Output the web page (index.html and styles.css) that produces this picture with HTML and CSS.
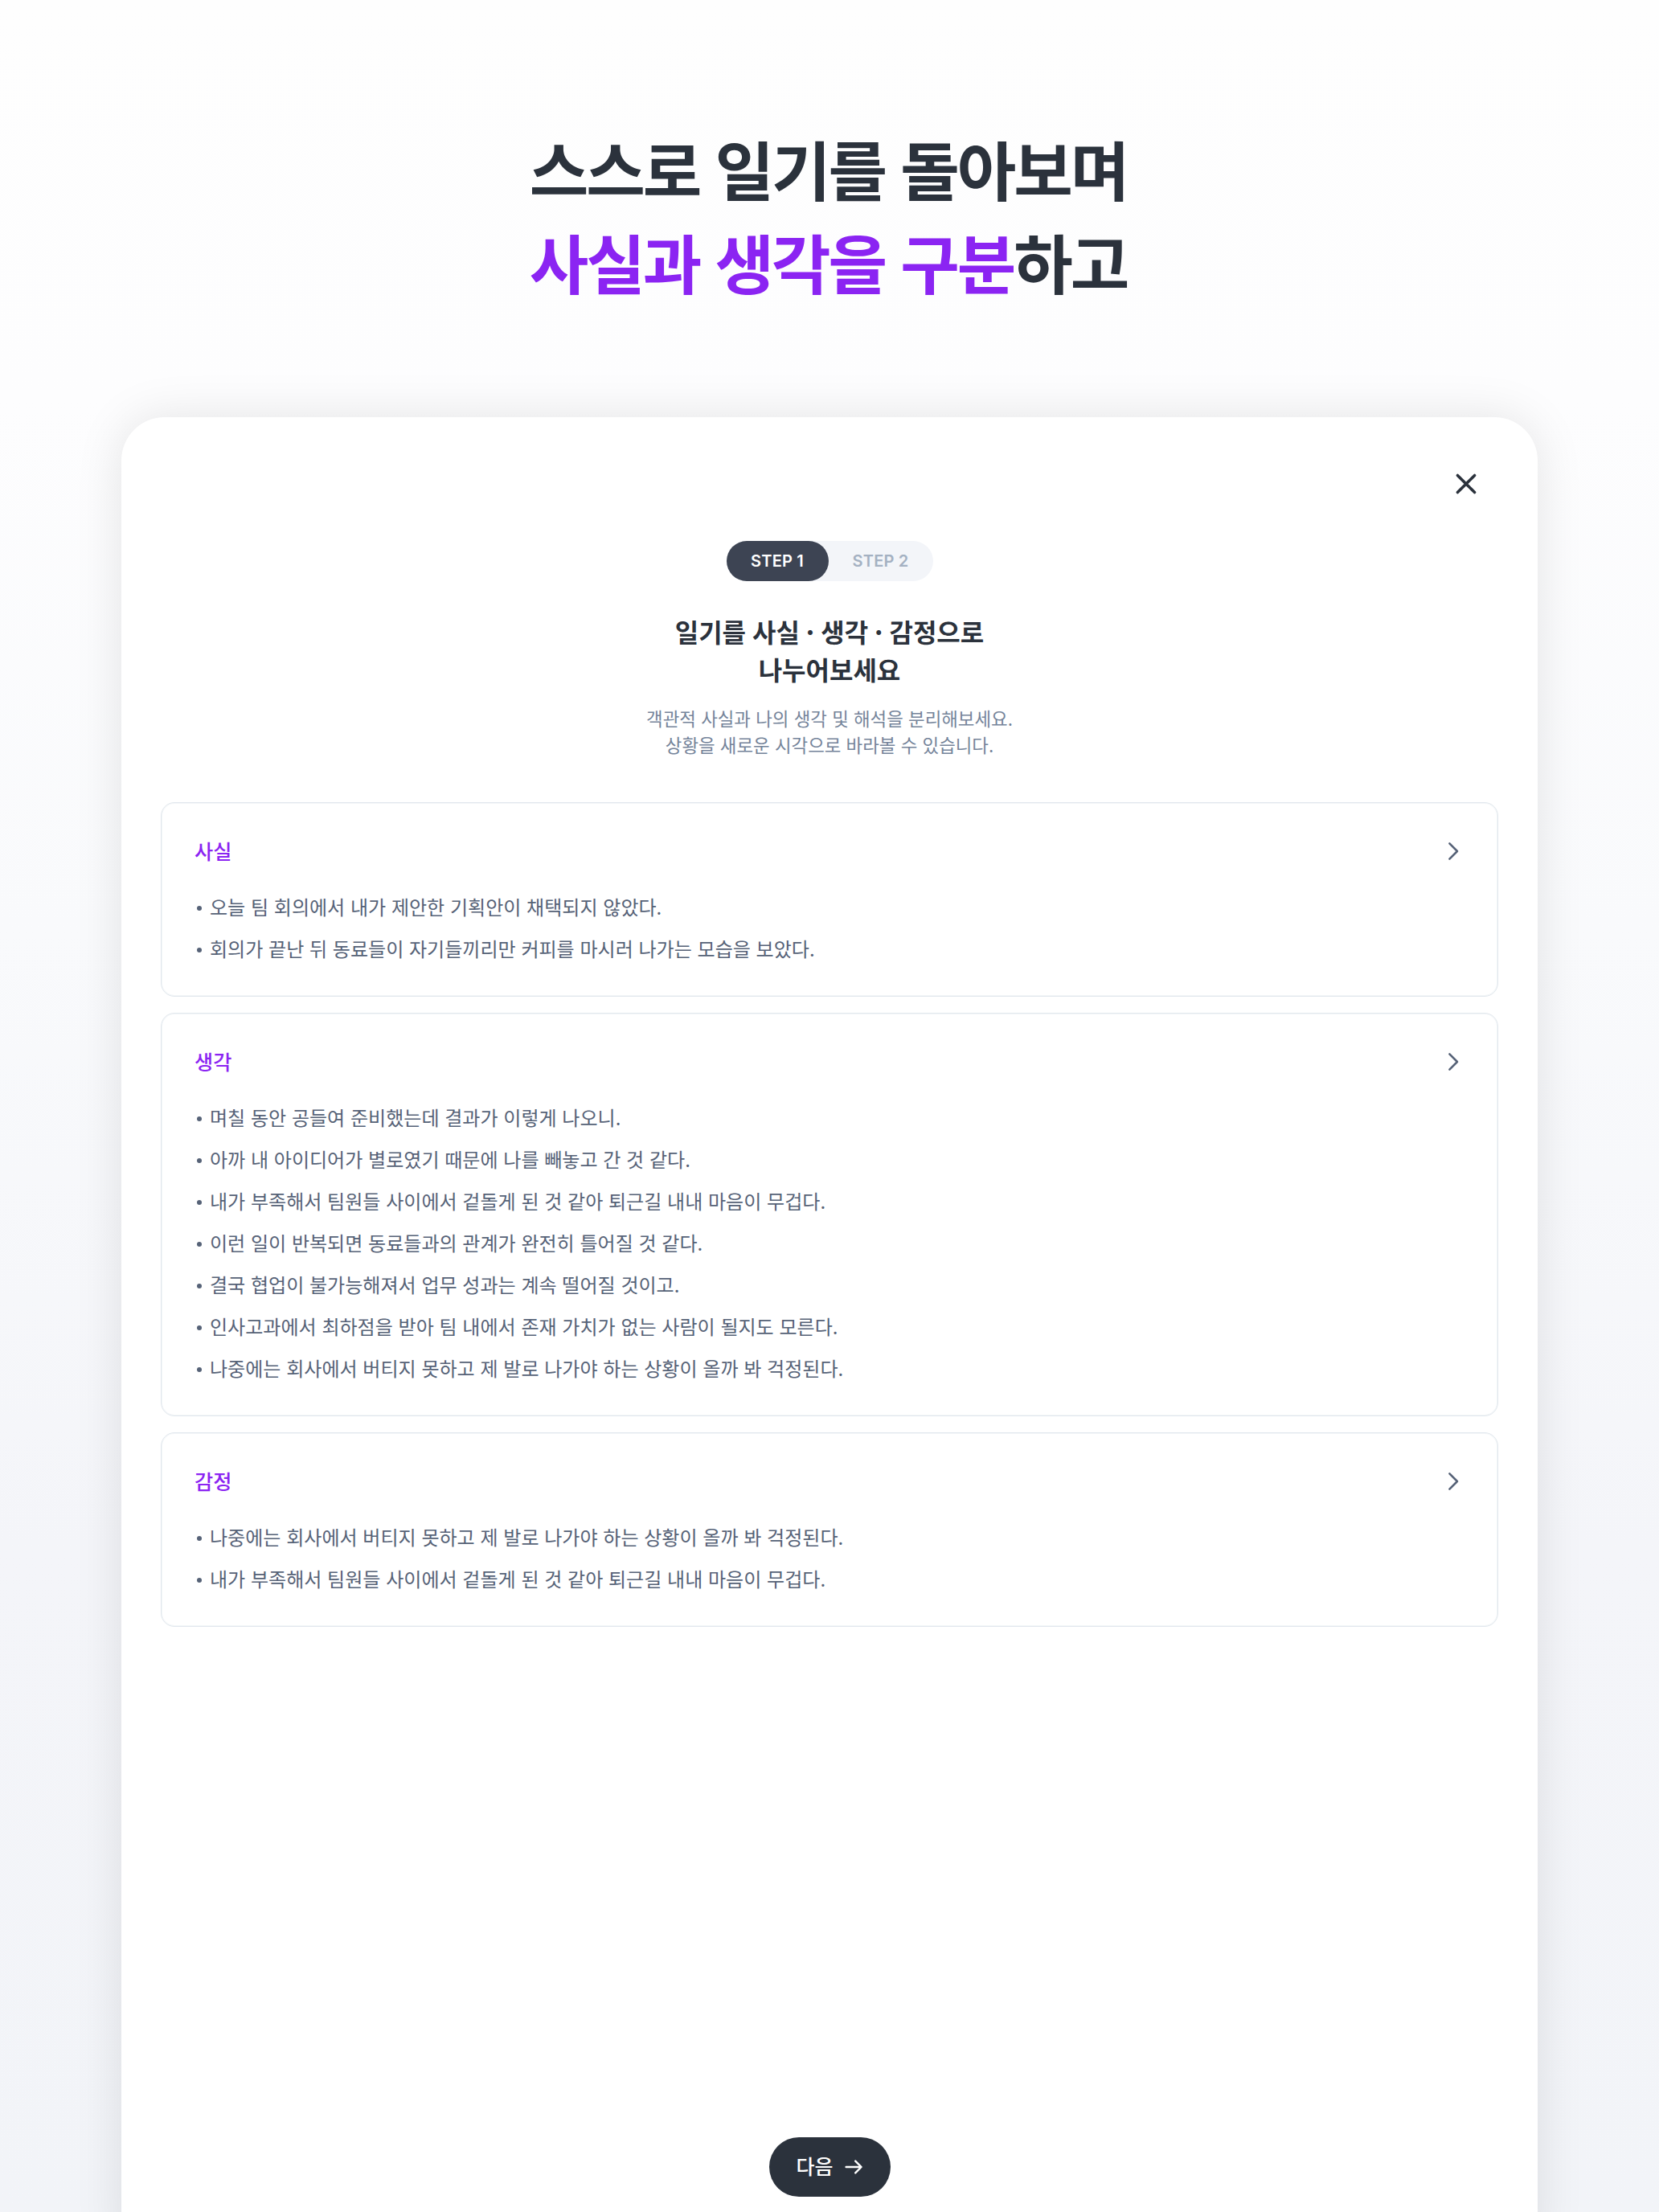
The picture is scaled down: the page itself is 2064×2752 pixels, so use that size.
FILE: index.html
```html
<!DOCTYPE html>
<html lang="ko">
<head>
<meta charset="utf-8">
<title>사실과 생각을 구분하고</title>
<link rel="stylesheet" href="styles.css">
</head>
<body>
<div class="page">
  <h1 class="headline">스스로 일기를 돌아보며<br><span class="accent">사실과 생각을 구분</span>하고</h1>
  <main class="panel">
    <div class="topbar">
      <svg class="close" viewBox="0 0 32 32"><path d="M5.4 5.4 26.6 26.6M26.6 5.4 5.4 26.6"/></svg>
    </div>
    <div class="steps"><span class="step active">STEP 1</span><span class="step">STEP 2</span></div>
    <h2 class="title">일기를 사실 · 생각 · 감정으로<br>나누어보세요</h2>
    <p class="subtitle">객관적 사실과 나의 생각 및 해석을 분리해보세요.<br>상황을 새로운 시각으로 바라볼 수 있습니다.</p>
    <div class="cards">
      <section class="card">
        <header class="card-head"><h3>사실</h3><svg class="chevron" viewBox="0 0 16 24"><path d="M3.4 2.4 13 12 3.4 21.6"/></svg></header>
        <ul>
          <li>오늘 팀 회의에서 내가 제안한 기획안이 채택되지 않았다.</li>
          <li>회의가 끝난 뒤 동료들이 자기들끼리만 커피를 마시러 나가는 모습을 보았다.</li>
        </ul>
      </section>
      <section class="card">
        <header class="card-head"><h3>생각</h3><svg class="chevron" viewBox="0 0 16 24"><path d="M3.4 2.4 13 12 3.4 21.6"/></svg></header>
        <ul>
          <li>며칠 동안 공들여 준비했는데 결과가 이렇게 나오니.</li>
          <li>아까 내 아이디어가 별로였기 때문에 나를 빼놓고 간 것 같다.</li>
          <li>내가 부족해서 팀원들 사이에서 겉돌게 된 것 같아 퇴근길 내내 마음이 무겁다.</li>
          <li>이런 일이 반복되면 동료들과의 관계가 완전히 틀어질 것 같다.</li>
          <li>결국 협업이 불가능해져서 업무 성과는 계속 떨어질 것이고.</li>
          <li>인사고과에서 최하점을 받아 팀 내에서 존재 가치가 없는 사람이 될지도 모른다.</li>
          <li>나중에는 회사에서 버티지 못하고 제 발로 나가야 하는 상황이 올까 봐 걱정된다.</li>
        </ul>
      </section>
      <section class="card">
        <header class="card-head"><h3>감정</h3><svg class="chevron" viewBox="0 0 16 24"><path d="M3.4 2.4 13 12 3.4 21.6"/></svg></header>
        <ul>
          <li>나중에는 회사에서 버티지 못하고 제 발로 나가야 하는 상황이 올까 봐 걱정된다.</li>
          <li>내가 부족해서 팀원들 사이에서 겉돌게 된 것 같아 퇴근길 내내 마음이 무겁다.</li>
        </ul>
      </section>
    </div>
    <button class="next" type="button"><span>다음</span><svg class="arrow" viewBox="0 0 24 20"><path d="M2.6 10H21.4M14.2 2.6 21.6 10 14.2 17.4"/></svg></button>
  </main>
</div>
</body>
</html>
```
FILE: styles.css
```css
* { box-sizing: border-box; margin: 0; padding: 0; }
body {
  font-family: "Noto Sans CJK KR", sans-serif;
  color: #2b323c;
}
.page {
  width: 2064px;
  height: 2752px;
  overflow: hidden;
  padding: 150px 151px 0;
  display: flex;
  flex-direction: column;
  background: linear-gradient(180deg, #fefefe 0%, #fdfdfe 18%, #f9fafc 42%, #f4f5f9 70%, #f2f4f8 100%);
}
.headline {
  flex: none;
  height: 369px;
  padding-right: 3px;
  text-align: center;
  font-size: 80px;
  font-weight: 700;
  line-height: 116px;
  letter-spacing: -3.1px;
}
.accent { color: #8b24f2; }
.panel {
  flex: none;
  height: 2300px;
  padding: 67px 49px 0;
  border-radius: 54px;
  background: #fff;
  box-shadow: 0 0 60px rgba(0, 0, 0, 0.1);
  display: flex;
  flex-direction: column;
  align-items: center;
}
.topbar {
  width: 100%;
  height: 87px;
  padding-right: 24px;
  display: flex;
  justify-content: flex-end;
}
svg { fill: none; stroke-linecap: round; stroke-linejoin: round; }
.close { width: 32px; height: 32px; stroke: #2b323c; stroke-width: 3.6; }
.steps {
  display: flex;
  height: 50px;
  border-radius: 25px;
  background: #f3f5f9;
}
.step {
  width: 127px;
  border-radius: 25px;
  text-align: center;
  font: 600 20px/51px Inter, sans-serif;
  letter-spacing: 0.2px;
  color: #a4b1c2;
}
.step:last-child { width: 130px; }
.step.active { background: #3d4453; color: #fff; }
.title {
  margin-top: 39px;
  text-align: center;
  font-size: 32px;
  font-weight: 700;
  line-height: 47px;
  word-spacing: -1px;
}
.subtitle {
  margin-top: 21px;
  text-align: center;
  font-size: 22.4px;
  line-height: 33px;
  color: #75849a;
}
.cards {
  width: 1664px;
  margin-top: 55px;
  display: flex;
  flex-direction: column;
  gap: 20px;
}
.card {
  padding: 40px 47px 34px 41px;
  border: 1px solid #e1e7ed;
  border-radius: 17px;
  box-shadow: inset 0 0 0 1px #f3f6f8;
}
.card-head {
  display: flex;
  align-items: center;
  justify-content: space-between;
  height: 38px;
  margin-bottom: 24px;
}
.card-head h3 { margin-bottom: 1px; font-size: 25.2px; font-weight: 500; color: #8b24f2; }
.chevron { width: 16px; height: 24px; margin-top: 1px; stroke: #566277; stroke-width: 2.6; }
ul { list-style: none; }
li {
  display: flex;
  align-items: center;
  gap: 10px;
  height: 52px;
  padding-left: 3px;
  font-size: 24.04px;
  color: #566277;
  white-space: nowrap;
}
li::before {
  content: "";
  width: 6px;
  height: 6px;
  margin-top: 5px;
  border-radius: 50%;
  background: currentColor;
}
.next {
  margin-top: 635px;
  width: 151px;
  height: 74px;
  border: 0;
  border-radius: 37px;
  background: #2b323c;
  color: #fff;
  font: 500 25px "Noto Sans CJK KR", sans-serif;
  display: flex;
  align-items: center;
  justify-content: center;
  gap: 13px;
}
.next span { margin-bottom: 4px; }
.arrow { width: 24px; height: 20px; margin-bottom: 1px; stroke: #fff; stroke-width: 2.4; }
```
